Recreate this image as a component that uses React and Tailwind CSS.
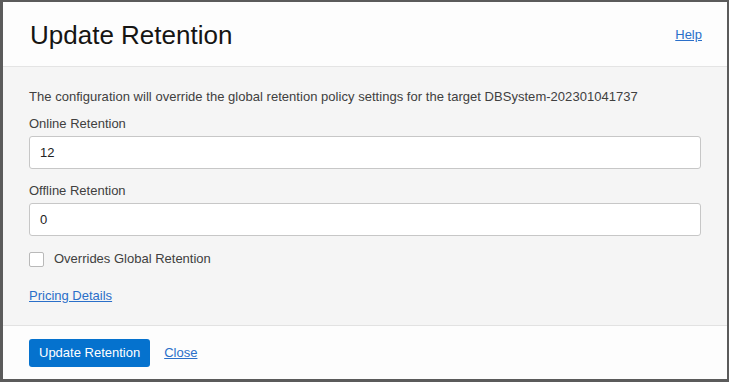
export default function App() {
  return (
    <div className="w-[729px] h-[382px] bg-[#5b5b5b] pl-[3px] pt-[2px] pr-[2px] pb-[3px] font-['Liberation_Sans',Arial,sans-serif]">
      <div className="h-full flex flex-col bg-[#f5f5f5]">
        {/* header */}
        <div className="h-[65px] bg-[#fdfdfd] border-b border-[#e4e4e4] flex items-center justify-between pl-[27px] pr-[25px] shrink-0">
          <h1 className="text-[26px] text-[#161513] leading-none pt-[1px]">Update Retention</h1>
          <a href="#" className="text-[13px] text-[#2a6fc9] underline pt-[1px]">Help</a>
        </div>

        {/* body */}
        <div className="flex-1 px-[26px] pt-[22px] text-[13px] text-[#404040]">
          <p className="leading-[16px] tracking-[0.03px]">
            The configuration will override the global retention policy settings for the target DBSystem-202301041737
          </p>

          <label className="block mt-[11px] leading-[16px]">Online Retention</label>
          <div className="mt-[4px] h-[33px] bg-white border border-[#c7c7c7] rounded-[3px] flex items-center px-[10px] text-[#222]">
            12
          </div>

          <label className="block mt-[14px] leading-[16px]">Offline Retention</label>
          <div className="mt-[4px] h-[33px] bg-white border border-[#c7c7c7] rounded-[3px] flex items-center px-[10px] text-[#222]">
            0
          </div>

          <div className="mt-[15px] flex items-center gap-[10px]">
            <span className="w-[15px] h-[15px] bg-white border border-[#b9b9b9] rounded-[2px]" />
            <span className="leading-[16px]">Overrides Global Retention</span>
          </div>

          <a href="#" className="block mt-[21px] w-fit leading-[16px] text-[#2a6fc9] underline">Pricing Details</a>
        </div>

        {/* footer */}
        <div className="h-[54px] bg-[#fdfdfd] border-t border-[#e2e2e2] flex items-center gap-[14px] pl-[26px] shrink-0">
          <button className="h-[28px] px-[10px] bg-[#0572ce] text-white text-[13px] rounded-[3px] mt-[1px]">
            Update Retention
          </button>
          <a href="#" className="text-[13px] text-[#2a6fc9] underline">Close</a>
        </div>
      </div>
    </div>
  );
}
